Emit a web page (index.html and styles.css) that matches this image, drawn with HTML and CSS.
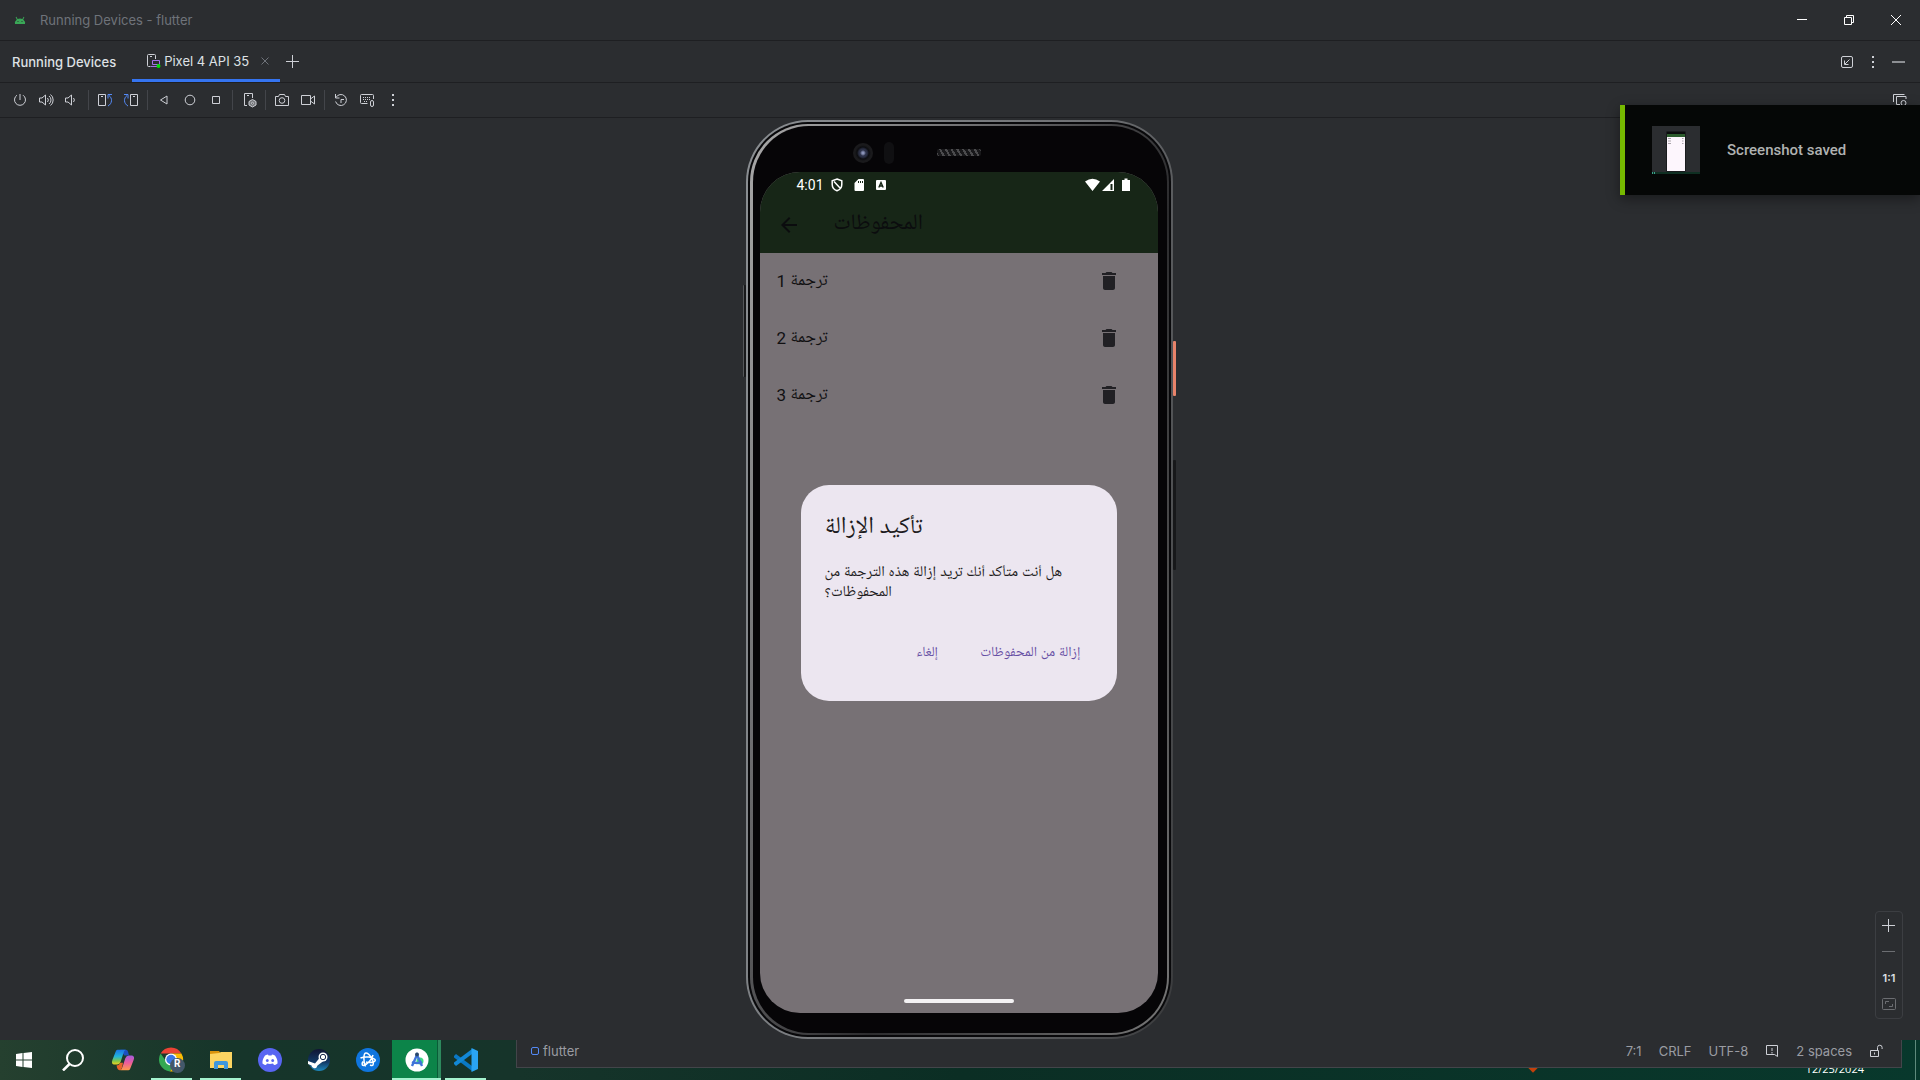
FILE: index.html
```html
<!DOCTYPE html>
<html lang="en">
<head>
<meta charset="utf-8">
<title>Running Devices - flutter</title>
<link rel="stylesheet" href="styles.css">
</head>
<body>
<svg class="defs" aria-hidden="true">
  <symbol id="trash" viewBox="0 0 24 24"><path d="M6 19c0 1.100.9 2 2 2h8c1.100 0 2-.9 2-2V7H6v12zM19 4h-3.500l-1-1h-5l-1 1H5v2h14V4z"/></symbol>
  <symbol id="dots" viewBox="0 0 16 16"><g fill="#ced0d6" stroke="none"><rect x="7" y="2" width="2" height="2"/><rect x="7" y="7" width="2" height="2"/><rect x="7" y="12" width="2" height="2"/></g></symbol>
</svg>

<header class="titlebar">
  <svg class="droid" viewBox="0 0 12 8" width="12" height="8"><path fill="#3aa757" d="M1 8a5 5 0 0 1 1.800-4.600L1.600 1.300l.8-.5 1.200 2.100a6 6 0 0 1 4.800 0L9.600.8l.8.5-1.200 2.100A5 5 0 0 1 11 8z"/><circle cx="4" cy="5.500" r=".6" fill="#2b2d30"/><circle cx="8" cy="5.500" r=".6" fill="#2b2d30"/></svg>
  <span class="title">Running Devices - flutter</span>
  <div class="winbtns">
    <button aria-label="Minimize"><svg viewBox="0 0 12 12" width="12" height="12"><path d="M1 5.500h10"/></svg></button>
    <button aria-label="Restore"><svg viewBox="0 0 12 12" width="12" height="12"><path d="M1.500 3.500h7v7h-7zM3.500 3V1.500h7v7H9"/></svg></button>
    <button aria-label="Close"><svg viewBox="0 0 12 12" width="12" height="12"><path d="M1 1l10 10M11 1L1 11"/></svg></button>
  </div>
</header>

<nav class="tabs">
  <span class="heading">Running Devices</span>
  <div class="tab">
    <svg viewBox="0 0 14 14" width="14" height="14" fill="none"><path stroke="#ced0d6" d="M3.500 12.500h-2a1 1 0 0 1-1-1v-10a1 1 0 0 1 1-1h6a1 1 0 0 1 1 1V5M3 2.500h2"/><path stroke="#a571e6" fill="#2b2d30" d="M5.500 6.500h7v4h-7zM4 12.500h6"/><circle cx="11.500" cy="12" r="2" fill="#00e000" stroke="none"/></svg>
    <span>Pixel 4 API 35</span>
    <button class="close" aria-label="Close tab"><svg viewBox="0 0 8 8" width="8" height="8"><path d="M.5.500l7 7M7.500.500l-7 7"/></svg></button>
  </div>
  <button class="add" aria-label="Add"><svg viewBox="0 0 14 14" width="14" height="14"><path d="M6.500 0v13M0 6.500h13"/></svg></button>
  <div class="tabtools">
    <button aria-label="Dock"><svg viewBox="0 0 16 16" width="16" height="16"><rect x="2.500" y="2.500" width="11" height="11" rx="1.500"/><path d="M10.500 5.500L6 10M5.500 6.500v4h4"/></svg></button>
    <button aria-label="Options"><svg width="16" height="16"><use href="#dots"/></svg></button>
    <button aria-label="Hide"><svg viewBox="0 0 16 16" width="16" height="16"><path stroke-width="2" d="M1 8h13" opacity=".6"/></svg></button>
  </div>
</nav>

<div class="toolbar">
  <button aria-label="Power"><svg viewBox="0 0 16 16" width="16" height="16"><path d="M8 2v6M5 3.200a5.500 5.500 0 1 0 6 0"/></svg></button>
  <button aria-label="Volume up"><svg viewBox="0 0 16 16" width="16" height="16"><path d="M1.500 6v4h2.500l3.500 3V3L4 6zM9.500 6a3 3 0 0 1 0 4M11 4a5 5 0 0 1 0 8M12.500 2.500a7 7 0 0 1 0 11"/></svg></button>
  <button aria-label="Volume down"><svg viewBox="0 0 16 16" width="16" height="16"><path d="M1.500 6v4H4l3.500 3V3L4 6zM9.500 6a3 3 0 0 1 0 4"/></svg></button>
  <i class="sep"></i>
  <button aria-label="Rotate left"><svg viewBox="0 0 16 16" width="16" height="16"><path d="M1.500 2.500h7v11h-7zM4 4.500h2"/><path class="blue" d="M11 14c4.500-2.500 4.500-8 1-10.500M15 2.500h-4v4"/></svg></button>
  <button aria-label="Rotate right"><svg viewBox="0 0 16 16" width="16" height="16"><path d="M7.500 2.500h7v11h-7zM10 4.500h2"/><path class="blue" d="M5 14C.5 11.500.5 6 4 3.500M1 2.500h4v4"/></svg></button>
  <i class="sep"></i>
  <button aria-label="Back"><svg viewBox="0 0 16 16" width="16" height="16"><path d="M11 4v8L4.500 8z"/></svg></button>
  <button aria-label="Home"><svg viewBox="0 0 16 16" width="16" height="16"><circle cx="8" cy="8" r="4.800"/></svg></button>
  <button aria-label="Overview"><svg viewBox="0 0 16 16" width="16" height="16"><path d="M4.500 4.500h7v7h-7z"/></svg></button>
  <i class="sep"></i>
  <button aria-label="Device settings"><svg viewBox="0 0 16 16" width="16" height="16"><path d="M6 13.500H3.500v-12h8V6M6 3.500h2"/><path fill="#77797d" d="M11.500 7.500l3.500 2v3.500l-3.500 2-3.500-2V9.500z"/><circle cx="11.500" cy="11.200" r="1" fill="#2b2d30"/></svg></button>
  <i class="sep"></i>
  <button aria-label="Screenshot"><svg viewBox="0 0 16 16" width="16" height="16"><path d="M1.500 4.500h3l1-2h5l1 2h3v9h-13z"/><circle cx="8" cy="8.500" r="2.800"/></svg></button>
  <button aria-label="Record"><svg viewBox="0 0 16 16" width="16" height="16"><path d="M1.500 3.500h9v9h-9zM10.500 7l4-3v8l-4-3"/></svg></button>
  <i class="sep"></i>
  <button aria-label="Restore state"><svg viewBox="0 0 16 16" width="16" height="16"><path d="M3 5.500a5.500 5.500 0 1 1-.4 4M2.500 2v4h4M8 11V7.500h3"/></svg></button>
  <button aria-label="Hardware input"><svg viewBox="0 0 16 16" width="16" height="16"><path d="M8.500 11.500h-6a1 1 0 0 1-1-1v-7a1 1 0 0 1 1-1h11a1 1 0 0 1 1 1V7"/><path stroke-dasharray="1 1" d="M4 5.500h8M4 7.500h8M5 9.500h4"/><rect x="11.500" y="8.500" width="3" height="6" rx="1.500"/></svg></button>
  <button aria-label="More"><svg width="16" height="16"><use href="#dots"/></svg></button>
  <button class="far" aria-label="Window options"><svg viewBox="0 0 16 16" width="16" height="16"><path d="M1.500 10V2.500h11M8 12.500H4.500v-8h9.500V7"/><circle cx="11.500" cy="11" r="2.500"/><path d="M13.500 13l2 2"/></svg></button>
</div>

<main class="stage">
  <div class="phone">
    <i class="key left"></i><i class="key power"></i><i class="key volume"></i>
    <div class="rim"><div class="bevel"><div class="face">
      <div class="sensors">
        <i class="camera"></i><i class="sensor"></i><i class="speaker"></i>
      </div>
      <div class="screen">
        <div class="appbar">
          <div class="status">
            <span>4:01</span>
            <svg viewBox="0 0 12 14" width="12" height="14" fill="none" stroke="#fff" stroke-width="1.500"><path d="M6 1l4.800 1.800v3.700c0 3-2 5.300-4.800 6.300-2.800-1-4.800-3.300-4.800-6.300V2.800zM3 3.500l6.500 7"/></svg>
            <svg viewBox="0 0 12 14" width="12" height="14" fill="#fff"><path d="M1.500 5l4-4H10q1 0 1 1v10q0 1-1 1H2.500q-1 0-1-1z"/><path stroke="#172617" d="M5.500 3v2M7.500 3v2M9.500 3v2"/></svg>
            <svg viewBox="0 0 12 14" width="12" height="14"><rect x="1" y="2" width="10" height="10" rx="1" fill="#fff"/><path d="M3.800 9.500L6 4.500l2.200 5M4.500 8h3" fill="none" stroke="#172617" stroke-width="1.400"/></svg>
            <svg class="signal" viewBox="0 0 46 14" width="46" height="14" fill="#fff"><path d="M0 3.500Q7.500-2 15 3.500L7.500 13zM17 13L29 1v12z"/><path fill="#172617" d="M25.500 6h2v6h-2z"/><path d="M37 2h2.500V.5h3V2H45v11h-8z"/></svg>
          </div>
          <div class="apptitle">
            <button aria-label="Back"><svg viewBox="0 0 24 24" width="24" height="24" fill="#0b0c0e"><path d="M20 11H7.800l5.600-5.600L12 4l-8 8 8 8 1.400-1.400L7.800 13H20z"/></svg></button>
            <h1 dir="rtl" lang="ar">المحفوظات</h1>
          </div>
        </div>
        <ul class="list">
          <li><span dir="rtl" lang="ar">ترجمة 1</span><button aria-label="Delete"><svg width="24" height="24"><use href="#trash"/></svg></button></li>
          <li><span dir="rtl" lang="ar">ترجمة 2</span><button aria-label="Delete"><svg width="24" height="24"><use href="#trash"/></svg></button></li>
          <li><span dir="rtl" lang="ar">ترجمة 3</span><button aria-label="Delete"><svg width="24" height="24"><use href="#trash"/></svg></button></li>
        </ul>
        <i class="homebar"></i>
        <div class="scrim">
          <section class="dialog" role="dialog" aria-labelledby="dlg-title">
            <h2 id="dlg-title" dir="rtl" lang="ar">تأكيد الإزالة</h2>
            <p dir="rtl" lang="ar">هل أنت متأكد أنك تريد إزالة هذه الترجمة من المحفوظات؟</p>
            <div class="actions">
              <button dir="rtl" lang="ar">إلغاء</button>
              <button dir="rtl" lang="ar">إزالة من المحفوظات</button>
            </div>
          </section>
        </div>
      </div>
    </div></div></div>
  </div>
  <div class="zoombox">
    <button aria-label="Zoom in"><svg viewBox="0 0 14 14" width="14" height="14"><path d="M6.500 0v13M0 6.500h13"/></svg></button>
    <button aria-label="Zoom out"><svg viewBox="0 0 14 14" width="14" height="14" opacity=".4"><path d="M0 6.500h13"/></svg></button>
    <button>1:1</button>
    <button aria-label="Fit"><svg viewBox="0 0 14 14" width="14" height="14" opacity=".4"><rect x=".5" y="1.500" width="13" height="11" rx="1"/><path d="M3.500 7V4.500H7M10.500 7v2.500H7"/></svg></button>
  </div>
</main>

<aside class="toast">
  <svg viewBox="0 0 48 48" width="48" height="48"><path fill="#2b2d30" d="M0 0h48v48H0z"/><path fill="#0b0c0d" d="M14.500 5.500h19v40h-19z"/><path fill="#fdf6fd" d="M15 11h18v34H15z"/><path fill="#2c5c2d" d="M15 8h18v3H15z"/><path fill="#a9a3aa" d="M30 12h1.500v1H30zM30 14.500h1.500v1H30zM30 17h1.500v1H30zM16 12h3v1h-3zM16 14.500h3v1h-3zM16 17h3v1h-3z"/><path fill="#0f2f22" d="M0 46h48v2H0z"/><path fill="#3aa08a" d="M0 46h1v2H0zM2 46h1v2H2z"/></svg>
  <span>Screenshot saved</span>
</aside>

<footer class="taskbar">
  <div class="apps">
    <button aria-label="Start"><svg viewBox="0 0 18 16" width="18" height="16" fill="#fff"><path d="M0 2l6.500-1v6.500H0zM7.500 1L16 0v7.500H7.500zM0 8.500h6.500V15L0 14zM7.500 8.500H16V16l-8.500-1z"/></svg></button>
    <button aria-label="Search"><svg viewBox="0 0 26 22" width="26" height="22" fill="none" stroke="#fff" stroke-width="2"><circle cx="14" cy="9" r="8"/><path stroke-width="2.500" d="M8.500 15L2 21.500"/></svg></button>
    <button aria-label="Copilot"><svg viewBox="0 0 24 26" width="24" height="24"><defs><linearGradient id="c1" x2="0" y2="1"><stop stop-color="#1b74e8"/><stop offset=".45" stop-color="#22b4d8"/><stop offset=".75" stop-color="#7fc74a"/><stop offset="1" stop-color="#f4d21f"/></linearGradient><linearGradient id="c2" x2="0" y2="1"><stop stop-color="#a35bdf"/><stop offset=".5" stop-color="#ec5c9b"/><stop offset="1" stop-color="#ff9a4a"/></linearGradient></defs><path fill="#1c4fc0" d="M9 2h6q2 0 2.500 2l1 4h-5z"/><path fill="url(#c1)" d="M6 2h9q-2 1-3 5L9.500 15q-1 3-4 3H2q-3-1-1.500-5L4 4q.6-2 2-2z"/><path fill="url(#c2)" d="M18 24H9q2-1 3-5l2.500-8q1-3 4-3H22q3 1 1.500 5L20 22q-.6 2-2 2z"/><path fill="#e8622b" d="M5 19q3 0 4-3h3l-1 5q-.7 3-3 3-2 0-3-5z"/></svg></button>
    <button class="open" aria-label="Chrome"><svg viewBox="0 0 26 26" width="26" height="26"><path fill="#ea4335" d="M1.600 6.500A12 12 0 0 1 22.400 6.500H12z"/><path fill="#34a853" d="M1.600 6.500A12 12 0 0 0 11 24.500l5-8.500L7 14z"/><path fill="#fbbc04" d="M22.400 6.500A12 12 0 0 1 11 24.500L17 14l-4-7.500z"/><circle cx="12" cy="12.500" r="6" fill="#fff"/><circle cx="12" cy="12.500" r="4.700" fill="#3b78e7"/><circle cx="18.500" cy="18.500" r="7.500" fill="#43586a"/></svg><b>R</b></button>
    <button class="open" aria-label="File Explorer"><svg viewBox="0 0 22 20" width="22" height="20"><path fill="#d9930d" d="M0 1h9l2 3H0z"/><path fill="#fcd462" d="M0 4l9-1 2-1h11v16H0z"/><path fill="#3f97dc" d="M4 19v-6q0-2 2-2h10q2 0 2 2v6h-4v-4H8v4z"/></svg></button>
    <button aria-label="Discord"><svg viewBox="0 0 24 24" width="24" height="24"><circle cx="12" cy="12" r="12" fill="#5865f2"/><path fill="#fff" d="M7 7.500q2-1 3-1l.5 1h3l.5-1q1 0 3 1 3 4.500 2.500 8-2 1.500-3.500 1.500l-1-1.500q-3 .8-6 0L8 17q-1.500 0-3.500-1.500Q4 12 7 7.500z"/><ellipse cx="9.300" cy="12.500" rx="1.400" ry="1.600" fill="#5865f2"/><ellipse cx="14.700" cy="12.500" rx="1.400" ry="1.600" fill="#5865f2"/></svg></button>
    <button aria-label="Steam"><svg viewBox="0 0 24 24" width="24" height="24"><defs><linearGradient id="st" x2="0" y2="1"><stop stop-color="#101433"/><stop offset=".6" stop-color="#123a66"/><stop offset="1" stop-color="#1d88bd"/></linearGradient></defs><circle cx="12" cy="12" r="11" fill="url(#st)"/><path fill="#fff" d="M1 13l7 2.500 4.500-5.500 4 3-6 4.500q-1 3.500-4 2.500-2-1-2-2.500L1 16z"/><circle cx="16" cy="9" r="4.500" fill="#fff"/><circle cx="16" cy="9" r="2.700" fill="#fff" stroke="#14254c"/></svg></button>
    <button aria-label="Battle.net"><svg viewBox="0 0 24 24" width="24" height="24"><circle cx="12" cy="12" r="12" fill="#0f75de"/><g fill="none" stroke="#fff" stroke-width="1.500"><path d="M9.500 18.500C7 13 7.500 5 10 5c3 0 8.500 8 7 12-.5 1-2 .5-3 0M4.500 10c5-2 12-1 14.500 1.500 1.500 2-4 4-9 2.500M17 7c-1 4-5 9-9.500 10.500-2 0-1.500-2.500-.5-4"/></g></svg></button>
    <button class="open active" aria-label="Android Studio"><svg viewBox="0 0 24 24" width="24" height="24"><circle cx="12" cy="12" r="11.500" fill="#fff"/><circle cx="15" cy="13" r="3.500" fill="#3ddc84"/><path fill="none" stroke="#3f74d8" stroke-width="2.400" d="M7 18l5-11 5 11M7 14q5 2 10 0"/><circle cx="12" cy="6.500" r="2" fill="#28466b"/></svg></button>
    <button class="open" aria-label="Visual Studio Code"><svg viewBox="0 0 24 24" width="24" height="24"><path fill="#0a78c4" d="M0 8l2-2 16 12v5L0 9.500z"/><path fill="#1288d6" d="M0 16l2 2L18 6V1L0 14.500z"/><path fill="#2aa4f4" d="M17.500 0L24 3v18l-6.500 3z"/></svg></button>
  </div>
  <div class="statusbar">
    <i class="module"></i><span>flutter</span>
    <span class="push">7:1</span><span>CRLF</span><span>UTF-8</span>
    <svg viewBox="0 0 14 14" width="14" height="14"><path d="M1.500 1.500h11v11l-3-2h-8zM7 4v3M7 8v1.500"/></svg>
    <span>2 spaces</span>
    <svg viewBox="0 0 14 14" width="14" height="14"><path d="M1.500 6.500h8v6h-8zM8.500 6V3.500a2.300 2.300 0 0 1 4.600 0V5M5.500 8.500v2"/></svg>
  </div>
  <span class="date">12/25/2024</span>
  <i class="flame"></i>
  <i class="peek"></i>
</footer>
</body>
</html>
```
FILE: styles.css
```css
* { box-sizing: border-box; }
body {
  margin: 0;
  height: 100vh;
  display: flex;
  flex-direction: column;
  position: relative;
  overflow: hidden;
  background: #2b2d30;
  color: #dfe1e5;
  font: 13px/16px Inter, "Noto Sans", sans-serif;
}
button {
  border: 0;
  padding: 0;
  background: none;
  color: inherit;
  font: inherit;
  display: flex;
  align-items: center;
  justify-content: center;
}
svg { display: block; flex: none; }
.defs { position: absolute; width: 0; height: 0; }

.titlebar, .tabs, .toolbar {
  display: flex;
  align-items: center;
  flex: none;
  border-bottom: 1px solid #1e1f22;
}
.titlebar svg, .tabs svg, .toolbar svg, .zoombox svg, .statusbar svg {
  fill: none;
  stroke: #ced0d6;
}
.titlebar { height: 41px; padding: 0 12px 0 14px; }
.titlebar .droid { stroke: none; }
.title { margin-left: 14px; color: #6f737a; }
.winbtns { display: flex; gap: 23px; margin-left: auto; }
.winbtns button { width: 24px; height: 24px; }
.winbtns svg { stroke: #fff; }

.tabs { height: 42px; padding-left: 12px; }
.heading { font-weight: 500; }
.tab {
  display: flex;
  align-items: center;
  align-self: stretch;
  gap: 3px;
  margin-left: 16px;
  padding: 2px 11px 0 15px;
  border-bottom: 3px solid #3574f0;
}
.tab .close { margin-left: 9px; }
.tabs .close svg { stroke: #6f737a; }
.add { margin-left: 6px; }
.tabtools { display: flex; gap: 10px; margin-left: auto; padding-right: 13px; }

.toolbar { height: 35px; padding: 0 12px; gap: 10px; }
.toolbar .sep { width: 1px; height: 20px; background: #43454a; margin: 0 -2px; }
.toolbar .blue { stroke: #548af7; }
.far { margin-left: auto; }

.stage {
  flex: 1;
  min-height: 0;
  position: relative;
  display: flex;
  justify-content: center;
  padding: 2px 2px 1px 0;
}
.phone {
  position: relative;
  height: 100%;
  aspect-ratio: 427 / 919;
  padding: 2px;
  border-radius: 62px;
  background: linear-gradient(100deg, #8b8f93, #6d6f72 60%, #3a3b3d);
}
.rim { height: 100%; padding: 2px; border-radius: 60px; background: #08080a; }
.bevel {
  height: 100%;
  padding: 2px 2px 2px 3px;
  border-radius: 58px;
  background: linear-gradient(110deg, #a9a9a9, #6e6e70 30%, #2c2c2e 60%, #777);
}
.face {
  height: 100%;
  display: flex;
  flex-direction: column;
  padding: 0 9px 20px 7px;
  border-radius: 56px;
  background: #060507;
}
.key { position: absolute; width: 3px; border-radius: 1px; }
.key.left { left: -3px; top: 18%; height: 10%; background: #17181a; border-left: 1px solid #55575a; }
.key.power { right: -3px; top: 24%; height: 6%; background: #e8836a; }
.key.volume { right: -3px; top: 37%; height: 12%; background: #17181a; }

.sensors { flex: none; height: 46px; position: relative; }
.camera {
  position: absolute; left: 93px; top: 17px; width: 20px; height: 20px; border-radius: 50%;
  background: radial-gradient(circle, #8a93b8 0 1px, #2b3046 3px 4px, #0c0d10 6px, #1a1a1c 8px);
}
.sensor { position: absolute; left: 124px; top: 16px; width: 10px; height: 22px; border-radius: 5px; background: #101012; }
.speaker {
  position: absolute; left: 177px; top: 23px; width: 44px; height: 7px; border-radius: 2px;
  background: repeating-linear-gradient(60deg, #4b4b4d 0 2px, #18181a 2px 5px);
}

.screen {
  flex: 1;
  min-height: 0;
  position: relative;
  overflow: hidden;
  border-radius: 40px;
  background: #777175;
  font-family: Roboto, "Noto Naskh Arabic UI", "Noto Naskh Arabic", "Noto Sans Arabic", "DejaVu Sans", sans-serif;
  color: #111012;
}
.appbar { height: 81px; background: #172617; }
.status { display: flex; align-items: center; gap: 10px; height: 26px; padding: 0 27px 0 37px; color: #fff; font-size: 14px; }
.status span { margin-right: -3px; }
.signal { margin-left: auto; }
.apptitle { display: flex; align-items: center; height: 54px; padding-left: 17px; color: #0b0c0e; }
h1, h2, p { margin: 0; text-align: left; font-weight: 400; }
h1 { margin-left: 33px; font-size: 22px; line-height: 28px; }
.list { margin: 0; padding: 0; list-style: none; }
.list li { display: flex; align-items: center; justify-content: space-between; height: 57px; padding: 0 37px 1px 17px; font-size: 17px; line-height: 24px; }
.list svg { fill: #212024; }
.homebar { position: absolute; left: 50%; bottom: 10px; width: 110px; height: 4px; margin-left: -55px; border-radius: 2px; background: #f4f2f4; }

.scrim { position: absolute; inset: 0; display: flex; align-items: center; justify-content: center; padding: 0 41px; }
.dialog { width: 100%; padding: 26px 24px 22px; border-radius: 28px; background: #ece6f0; color: #1d1b20; }
.dialog h2 { font-size: 24px; line-height: 34px; }
.dialog p { margin-top: 18px; font-size: 15px; line-height: 20px; }
.actions { display: flex; justify-content: flex-end; gap: 18px; margin-top: 24px; }
.actions button { height: 52px; padding: 0 12px; color: #6750a4; font-size: 14px; line-height: 20px; }

.zoombox {
  position: absolute;
  right: 17px;
  bottom: 21px;
  width: 28px;
  padding: 1px 0;
  border: 1px solid #3c3e42;
  border-radius: 4px;
}
.zoombox button { width: 100%; height: 26px; font-size: 11px; font-weight: 600; }

.toast {
  position: absolute;
  right: 0;
  top: 105px;
  width: 300px;
  height: 90px;
  display: flex;
  align-items: center;
  gap: 27px;
  padding-left: 27px;
  border-left: 5px solid #76b900;
  background: #050706;
  box-shadow: 0 4px 12px #0006;
  color: #b0b2b1;
  font: 500 15px/20px Roboto, sans-serif;
}

.taskbar {
  flex: none;
  position: relative;
  display: flex;
  height: 40px;
  background: linear-gradient(90deg, #25402f, #16352a 12%, #16342a 27%, #0b2e24 50%, #08382c);
}
.apps { display: flex; width: 516px; flex: none; }
.apps button { position: relative; width: 49px; height: 40px; }
.apps .open { border-bottom: 2px solid #a5f3cf; margin: 0 4px; width: 41px; }
.apps .open svg { margin-top: 2px; }
.apps .active { width: 49px; margin: 0; background: linear-gradient(90deg, #0c8449 45px, #0a5c38 45px 46px, #2c8a5d 46px); }
.apps b { position: absolute; left: 23px; top: 18px; color: #fff; font: 700 10px/12px Roboto, sans-serif; }
.statusbar {
  position: relative;
  z-index: 1;
  flex: 1;
  display: flex;
  align-items: center;
  gap: 17px;
  height: 28px;
  margin-right: 18px;
  padding: 0 18px 5px 14px;
  background: #2b2d30;
  border: solid #43454a;
  border-width: 0 1px 1px;
  color: #9a9ca2;
}
.module { width: 8px; height: 8px; margin-right: -13px; border: 1px solid #548af7; border-radius: 2px; }
.push { margin-left: auto; }
.date { position: absolute; right: 56px; bottom: 3px; color: #fff; font: 11px/16px "Open Sans", sans-serif; }
.flame { position: absolute; right: 383px; bottom: 9px; width: 8px; height: 8px; background: #c2410c; transform: rotate(45deg); }
.peek { position: absolute; right: 4px; top: 0; width: 1px; height: 40px; background: #5f8a7c; }
```
